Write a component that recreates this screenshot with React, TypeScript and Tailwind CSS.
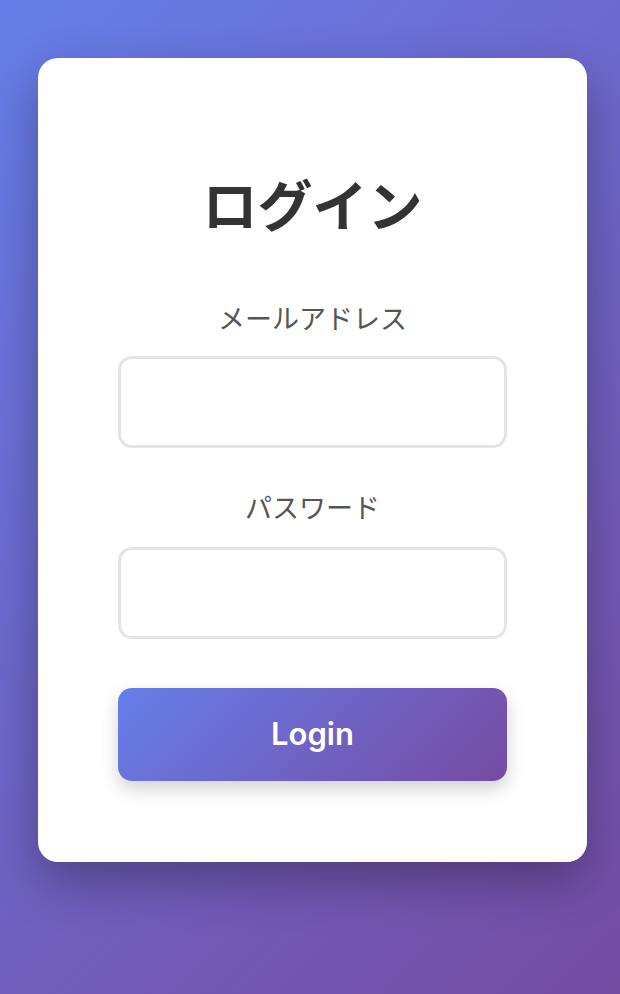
export default function App() {
  return (
    <div className="flex min-h-[994px] w-full items-start bg-[linear-gradient(135deg,#667eea_0%,#764ba2_100%)] pl-[38px] pt-[58px] font-['Noto_Sans','Noto_Sans_CJK_JP',sans-serif]">
      <div className="w-[549px] shrink-0 rounded-[20px] bg-white px-[80px] pb-[81px] pt-[80px] shadow-[0_20px_50px_rgba(0,0,0,0.3)]">
        <h1 className="mt-[33px] text-center font-['Noto_Sans_CJK_JP',sans-serif] text-[55px] font-bold leading-[62px] text-[#333]">
          ログイン
        </h1>

        <form className="mt-[65px] flex flex-col" onSubmit={(e) => e.preventDefault()}>
          <label className="text-center font-['Noto_Sans_CJK_JP',sans-serif] text-[27px] leading-[39px] text-[#555]">
            メールアドレス
          </label>
          <input
            type="email"
            className="mt-[19px] h-[92px] w-full rounded-[14px] border-[3px] border-[#e4e4e8] bg-white px-4 text-[24px] outline-none"
          />

          <label className="mt-[39px] text-center font-['Noto_Sans_CJK_JP',sans-serif] text-[27px] leading-[39px] text-[#555]">
            パスワード
          </label>
          <input
            type="password"
            className="mt-[21px] h-[92px] w-full rounded-[14px] border-[3px] border-[#e4e4e8] bg-white px-4 text-[24px] outline-none"
          />

          <button
            type="submit"
            className="mt-[49px] h-[93px] w-full rounded-[14px] bg-[linear-gradient(135deg,#667eea_0%,#764ba2_100%)] font-['Inter','Noto_Sans',sans-serif] text-[31px] font-semibold text-white shadow-[0_8px_18px_rgba(0,0,0,0.18)]"
          >
            Login
          </button>
        </form>
      </div>
    </div>
  );
}
